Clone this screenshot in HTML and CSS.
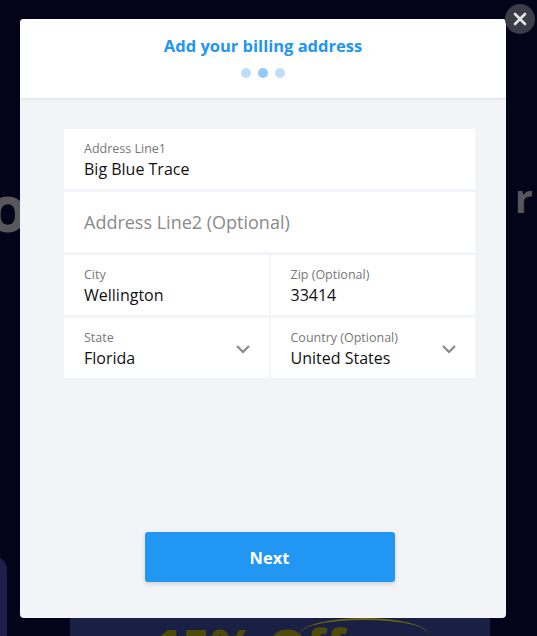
FILE: index.html
```html
<!DOCTYPE html>
<html lang="en">
<head>
    <meta charset="UTF-8">
    <meta name="viewport" content="width=device-width, initial-scale=1.0">
    <title>Billing Address</title>
    <link rel="stylesheet" href="styles.css">
</head>
<body>

<!-- Page behind the dialog -->
<div class="page">
    <div class="page-title">
        <span class="title-left">ol</span>
        <span class="title-right">r</span>
    </div>
    <div class="side-card"></div>
    <div class="promo-card">
        <div class="promo-arc"></div>
        <div class="promo-text">15% Off</div>
    </div>
</div>

<!-- Billing dialog -->
<div class="overlay">
    <div class="modal">
        <button class="close-button" aria-label="Close">
            <svg width="14" height="14" viewBox="0 0 14 14">
                <path d="M2 2 L12 12 M12 2 L2 12" stroke="#e4e4e8" stroke-width="2.6" stroke-linecap="round"/>
            </svg>
        </button>

        <div class="modal-header">
            <h2>Add your billing address</h2>
            <div class="steps">
                <span class="step"></span>
                <span class="step active"></span>
                <span class="step"></span>
            </div>
        </div>

        <div class="modal-body">
            <div class="fields">
                <div class="field">
                    <label>Address Line1</label>
                    <div class="value">Big Blue Trace</div>
                </div>
                <div class="field placeholder-field">
                    <div class="placeholder">Address Line2 (Optional)</div>
                </div>
                <div class="field-row">
                    <div class="field">
                        <label>City</label>
                        <div class="value">Wellington</div>
                    </div>
                    <div class="field">
                        <label>Zip (Optional)</label>
                        <div class="value">33414</div>
                    </div>
                </div>
                <div class="field-row">
                    <div class="field select-field">
                        <div>
                            <label>State</label>
                            <div class="value">Florida</div>
                        </div>
                        <svg class="chevron" width="16" height="10" viewBox="0 0 16 10">
                            <path d="M2 2 L8 8 L14 2" fill="none" stroke="#8a8a8a" stroke-width="2.2"/>
                        </svg>
                    </div>
                    <div class="field select-field">
                        <div>
                            <label>Country (Optional)</label>
                            <div class="value">United States</div>
                        </div>
                        <svg class="chevron" width="16" height="10" viewBox="0 0 16 10">
                            <path d="M2 2 L8 8 L14 2" fill="none" stroke="#8a8a8a" stroke-width="2.2"/>
                        </svg>
                    </div>
                </div>
            </div>

            <button class="next-button">Next</button>
        </div>
    </div>
</div>

</body>
</html>
```

FILE: styles.css
```css
body {
    margin: 0;
    padding: 0;
    background-color: #03041a;
    font-family: "Open Sans", Arial, sans-serif;
    height: 636px;
    overflow: hidden;
}

/* Page behind the dialog */
.page {
    position: relative;
    height: 636px;
    overflow: hidden;
}

.page-title {
    display: flex;
    justify-content: space-between;
    align-items: flex-start;
    padding-top: 170px;
    margin-left: -12px;
    padding-right: 4px;
    font-weight: 700;
    color: #58585c;
}

.title-left {
    font-size: 64px;
    line-height: 1.2;
    letter-spacing: 3px;
}

.title-right {
    font-size: 40px;
    line-height: 1;
    margin-top: 8px;
}

.side-card {
    position: absolute;
    left: -40px;
    top: 556px;
    width: 47px;
    height: 120px;
    border-radius: 14px;
    background-color: #1c2048;
}

.promo-card {
    position: absolute;
    left: 70px;
    top: 600px;
    width: 420px;
    height: 36px;
    overflow: hidden;
    background-color: #1a1f44;
}

.promo-arc {
    position: absolute;
    left: 230px;
    top: 18px;
    width: 128px;
    height: 30px;
    border-top: 2px solid #6b6410;
    border-radius: 50% 50% 0 0;
}

.promo-text {
    position: absolute;
    left: 84px;
    top: 22px;
    font-size: 48px;
    line-height: 1;
    font-weight: 800;
    color: #4d4a0a;
}

/* Dialog */
.overlay {
    position: fixed;
    inset: 0;
    display: flex;
    justify-content: flex-start;
    padding: 19px 0 0 20px;
}

.modal {
    position: relative;
    width: 486px;
    height: 599px;
    border-radius: 4px;
    background-color: #f3f4f8;
    display: flex;
    flex-direction: column;
}

.close-button {
    position: absolute;
    top: -15px;
    right: -29px;
    width: 30px;
    height: 30px;
    border-radius: 50%;
    border: none;
    padding: 0;
    background-color: #3b3c46;
    display: flex;
    align-items: center;
    justify-content: center;
    cursor: pointer;
}

.modal-header {
    background-color: #ffffff;
    border-radius: 4px 4px 0 0;
    height: 80px;
    box-sizing: border-box;
    padding-top: 16px;
    text-align: center;
    border-bottom: 1px solid #e6e7ec;
    box-shadow: 0 1px 2px rgba(0, 0, 0, 0.04);
}

.modal-header h2 {
    margin: 0;
    font-size: 16.5px;
    font-weight: 700;
    color: #2196f3;
    line-height: 22px;
}

.steps {
    display: flex;
    justify-content: center;
    gap: 7px;
    margin-top: 11px;
}

.step {
    width: 10px;
    height: 10px;
    border-radius: 50%;
    background-color: #bbdefb;
}

.step.active {
    background-color: #90caf9;
}

.modal-body {
    flex: 1;
    display: flex;
    flex-direction: column;
    align-items: center;
    padding: 30px 0 0 13px;
}

.fields {
    width: 411px;
    display: flex;
    flex-direction: column;
    gap: 3px;
}

.field {
    background-color: #ffffff;
    height: 60px;
    box-sizing: border-box;
    padding: 11px 20px 0;
}

.field label {
    display: block;
    font-size: 12.5px;
    color: #777777;
    line-height: 18px;
}

.field .value {
    font-size: 16px;
    color: #111111;
    line-height: 22px;
}

.placeholder-field {
    display: flex;
    align-items: center;
    padding-top: 0;
}

.placeholder {
    font-size: 18px;
    color: #8a8a8a;
}

.field-row {
    display: flex;
    gap: 2px;
}

.field-row .field {
    flex: 1;
}

.select-field {
    display: flex;
    justify-content: space-between;
    align-items: flex-start;
}

.chevron {
    margin-top: 15px;
    margin-right: -2px;
}

.next-button {
    margin-top: 154px;
    width: 250px;
    height: 50px;
    border: none;
    border-radius: 3px;
    background-color: #2196f3;
    color: #ffffff;
    font-family: "Open Sans", Arial, sans-serif;
    font-size: 16.5px;
    font-weight: 700;
    box-shadow: 0 2px 4px rgba(0, 0, 0, 0.15);
    cursor: pointer;
}
```
